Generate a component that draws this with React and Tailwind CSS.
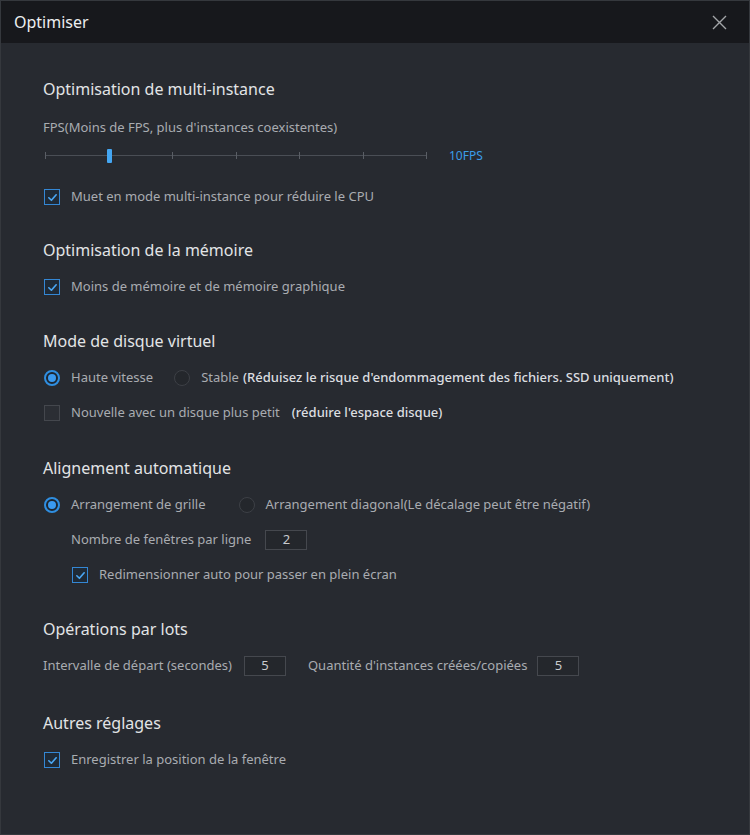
import { useState } from "react";

const font = { fontFamily: '"Noto Sans", "Open Sans", sans-serif' };

function Checkbox({ checked, onChange }) {
  return (
    <button
      type="button"
      onClick={onChange}
      className={
        checked
          ? "flex h-[16px] w-[16px] shrink-0 items-center justify-center border border-[#3487d4] bg-[#1f2a36]"
          : "flex h-[16px] w-[16px] shrink-0 items-center justify-center border border-[#44474d] bg-[#2b2e34]"
      }
    >
      {checked && (
        <svg width="11" height="11" viewBox="0 0 12 12" fill="none">
          <path d="M2 6.3 L4.8 9 L10 3" stroke="#4aa6f2" strokeWidth="1.8" strokeLinecap="round" strokeLinejoin="round" />
        </svg>
      )}
    </button>
  );
}

function Radio({ checked, onChange }) {
  return (
    <button
      type="button"
      onClick={onChange}
      className={
        checked
          ? "flex h-[16px] w-[16px] shrink-0 items-center justify-center rounded-full border-2 border-[#2f8ee0] bg-[#1d2630]"
          : "flex h-[16px] w-[16px] shrink-0 items-center justify-center rounded-full border border-[#3d4046] bg-[#24272c]"
      }
    >
      {checked && <span className="h-[8px] w-[8px] rounded-full bg-[#3a9af0]" />}
    </button>
  );
}

function NumberBox({ value }) {
  return (
    <div className="flex h-[20px] w-[42px] items-center justify-center border border-[#45484e] bg-[#24272c] text-[13px] text-[#c9cbce]">
      {value}
    </div>
  );
}

function Heading({ children, className }) {
  return <div className={"h-[22px] text-[16px] leading-[22px] text-[#e2e4e6] " + (className || "")}>{children}</div>;
}

function Slider({ step, setStep }) {
  const ticks = [0, 1, 2, 3, 4, 5, 6];
  return (
    <div className="relative ml-[2px] h-[20px] w-[382px]">
      <div className="absolute left-0 right-0 top-[9px] h-px bg-[#4a4e55]" />
      {ticks.map((t) => (
        <button
          type="button"
          key={t}
          onClick={() => setStep(t)}
          className="absolute top-[6px] h-[7px] w-px bg-[#5a5e65]"
          style={{ left: `${(t * 381) / 6}px` }}
        />
      ))}
      <div
        className="absolute top-[3px] h-[14px] w-[5px] rounded-[1px] bg-[#44a6f2]"
        style={{ left: `${(step * 381) / 6 - 2}px` }}
      />
    </div>
  );
}

export default function App() {
  const [fpsStep, setFpsStep] = useState(1);
  const [mute, setMute] = useState(true);
  const [lessMemory, setLessMemory] = useState(true);
  const [diskMode, setDiskMode] = useState("fast");
  const [smallDisk, setSmallDisk] = useState(false);
  const [arrange, setArrange] = useState("grid");
  const [autoResize, setAutoResize] = useState(true);
  const [savePosition, setSavePosition] = useState(true);

  return (
    <div style={font} className="flex h-[835px] w-[750px] flex-col overflow-hidden border border-[#35383d] bg-[#272a30]">
      <div className="flex h-[42px] shrink-0 items-center justify-between bg-[#17181c] pl-[13px] pr-[22px]">
        <span className="text-[16px] text-[#eceef0]">Optimiser</span>
        <svg width="15" height="15" viewBox="0 0 15 15" fill="none">
          <path d="M1 1 L14 14 M14 1 L1 14" stroke="#a3a5a8" strokeWidth="1.4" />
        </svg>
      </div>

      <div className="flex flex-col pl-[42px] pt-[35px] text-[13px] text-[#a9acb1]">
        <Heading>Optimisation de multi-instance</Heading>
        <div className="mt-[18px] h-[18px] leading-[18px]">FPS(Moins de FPS, plus d'instances coexistentes)</div>
        <div className="mt-[10px] flex h-[20px] items-center gap-[22px]">
          <Slider step={fpsStep} setStep={setFpsStep} />
          <span className="text-[12px] text-[#3b9de8]">{fpsStep * 5 + 5}FPS</span>
        </div>
        <div className="mt-[21px] flex h-[20px] items-center gap-[11px] pl-[1px]">
          <Checkbox checked={mute} onChange={() => setMute(!mute)} />
          <span>Muet en mode multi-instance pour réduire le CPU</span>
        </div>

        <Heading className="mt-[32px]">Optimisation de la mémoire</Heading>
        <div className="mt-[16px] flex h-[20px] items-center gap-[11px] pl-[1px]">
          <Checkbox checked={lessMemory} onChange={() => setLessMemory(!lessMemory)} />
          <span>Moins de mémoire et de mémoire graphique</span>
        </div>

        <Heading className="mt-[33px]">Mode de disque virtuel</Heading>
        <div className="mt-[16px] flex h-[20px] items-center pl-[1px]">
          <Radio checked={diskMode === "fast"} onChange={() => setDiskMode("fast")} />
          <span className="ml-[11px]">Haute vitesse</span>
          <span className="ml-[21px]">
            <Radio checked={diskMode === "stable"} onChange={() => setDiskMode("stable")} />
          </span>
          <span className="ml-[11px]">Stable</span>
          <span className="ml-[4px] font-medium text-[#dcdee0]">(Réduisez le risque d'endommagement des fichiers. SSD uniquement)</span>
        </div>
        <div className="mt-[15px] flex h-[20px] items-center pl-[1px]">
          <Checkbox checked={smallDisk} onChange={() => setSmallDisk(!smallDisk)} />
          <span className="ml-[11px]">Nouvelle avec un disque plus petit</span>
          <span className="ml-[12px] font-medium text-[#dcdee0]">(réduire l'espace disque)</span>
        </div>

        <Heading className="mt-[34px]">Alignement automatique</Heading>
        <div className="mt-[16px] flex h-[20px] items-center pl-[1px]">
          <Radio checked={arrange === "grid"} onChange={() => setArrange("grid")} />
          <span className="ml-[11px]">Arrangement de grille</span>
          <span className="ml-[33px]">
            <Radio checked={arrange === "diag"} onChange={() => setArrange("diag")} />
          </span>
          <span className="ml-[11px]">Arrangement diagonal(Le décalage peut être négatif)</span>
        </div>
        <div className="mt-[15px] flex h-[20px] items-center gap-[14px] pl-[28px]">
          <span>Nombre de fenêtres par ligne</span>
          <NumberBox value="2" />
        </div>
        <div className="mt-[15px] flex h-[20px] items-center gap-[11px] pl-[29px]">
          <Checkbox checked={autoResize} onChange={() => setAutoResize(!autoResize)} />
          <span>Redimensionner auto pour passer en plein écran</span>
        </div>

        <Heading className="mt-[33px]">Opérations par lots</Heading>
        <div className="mt-[16px] flex h-[20px] items-center">
          <span>Intervalle de départ (secondes)</span>
          <span className="ml-[12px]">
            <NumberBox value="5" />
          </span>
          <span className="ml-[22px]">Quantité d'instances créées/copiées</span>
          <span className="ml-[10px]">
            <NumberBox value="5" />
          </span>
        </div>

        <Heading className="mt-[36px]">Autres réglages</Heading>
        <div className="mt-[16px] flex h-[20px] items-center gap-[11px] pl-[1px]">
          <Checkbox checked={savePosition} onChange={() => setSavePosition(!savePosition)} />
          <span>Enregistrer la position de la fenêtre</span>
        </div>
      </div>
    </div>
  );
}
